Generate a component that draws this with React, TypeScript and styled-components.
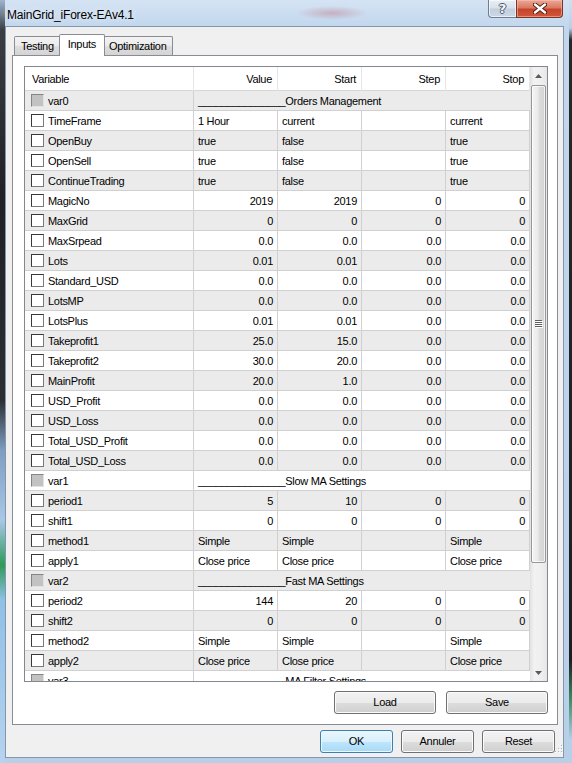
import React from 'react';
import styled, { createGlobalStyle, css } from 'styled-components';

const UI_FONT = `"Liberation Sans", Arial, sans-serif`;

const GlobalStyle = createGlobalStyle`
  html, body { margin: 0; padding: 0; }
  body { width: 572px; height: 763px; overflow: hidden; background: #b9cfe7; }
  *, *::before, *::after { box-sizing: border-box; }
`;

type Kind = 'num' | 'text';
interface Param {
  name: string;
  section?: string;
  kind?: Kind;
  values?: string[];
}

const UNDERLINE = '_______________';

const params: Param[] = [
  { name: 'var0', section: 'Orders Management' },
  { name: 'TimeFrame', kind: 'text', values: ['1 Hour', 'current', '', 'current'] },
  { name: 'OpenBuy', kind: 'text', values: ['true', 'false', '', 'true'] },
  { name: 'OpenSell', kind: 'text', values: ['true', 'false', '', 'true'] },
  { name: 'ContinueTrading', kind: 'text', values: ['true', 'false', '', 'true'] },
  { name: 'MagicNo', kind: 'num', values: ['2019', '2019', '0', '0'] },
  { name: 'MaxGrid', kind: 'num', values: ['0', '0', '0', '0'] },
  { name: 'MaxSrpead', kind: 'num', values: ['0.0', '0.0', '0.0', '0.0'] },
  { name: 'Lots', kind: 'num', values: ['0.01', '0.01', '0.0', '0.0'] },
  { name: 'Standard_USD', kind: 'num', values: ['0.0', '0.0', '0.0', '0.0'] },
  { name: 'LotsMP', kind: 'num', values: ['0.0', '0.0', '0.0', '0.0'] },
  { name: 'LotsPlus', kind: 'num', values: ['0.01', '0.01', '0.0', '0.0'] },
  { name: 'Takeprofit1', kind: 'num', values: ['25.0', '15.0', '0.0', '0.0'] },
  { name: 'Takeprofit2', kind: 'num', values: ['30.0', '20.0', '0.0', '0.0'] },
  { name: 'MainProfit', kind: 'num', values: ['20.0', '1.0', '0.0', '0.0'] },
  { name: 'USD_Profit', kind: 'num', values: ['0.0', '0.0', '0.0', '0.0'] },
  { name: 'USD_Loss', kind: 'num', values: ['0.0', '0.0', '0.0', '0.0'] },
  { name: 'Total_USD_Profit', kind: 'num', values: ['0.0', '0.0', '0.0', '0.0'] },
  { name: 'Total_USD_Loss', kind: 'num', values: ['0.0', '0.0', '0.0', '0.0'] },
  { name: 'var1', section: 'Slow MA Settings' },
  { name: 'period1', kind: 'num', values: ['5', '10', '0', '0'] },
  { name: 'shift1', kind: 'num', values: ['0', '0', '0', '0'] },
  { name: 'method1', kind: 'text', values: ['Simple', 'Simple', '', 'Simple'] },
  { name: 'apply1', kind: 'text', values: ['Close price', 'Close price', '', 'Close price'] },
  { name: 'var2', section: 'Fast MA Settings' },
  { name: 'period2', kind: 'num', values: ['144', '20', '0', '0'] },
  { name: 'shift2', kind: 'num', values: ['0', '0', '0', '0'] },
  { name: 'method2', kind: 'text', values: ['Simple', 'Simple', '', 'Simple'] },
  { name: 'apply2', kind: 'text', values: ['Close price', 'Close price', '', 'Close price'] },
  { name: 'var3', section: 'MA Filter Settings' },
];

const COLS = '169px 84px 84px 84px 84px';

/* ---------- window frame ---------- */

const Window = styled.div`
  width: 572px;
  height: 763px;
  display: flex;
  flex-direction: column;
  padding: 0 8px 5px 5px;
  font-family: ${UI_FONT};
  font-size: 11px;
  letter-spacing: -0.3px;
  color: #000;
  background:
    linear-gradient(to bottom, #9fb6cf 0px, #3a3d42 30px, #1f2124 200px, #2b2e33 400px, #7e9dbf 450px, #a9c8e8 520px, #2f9a58 565px, #8fc0e6 600px, #b7d3ef 763px) left top / 5px 100% no-repeat,
    linear-gradient(to bottom, #cfe0f2 0px, #b9cfe7 28px, #26282c 40px, #1d1f22 660px, #3b8d64 700px, #b4d0ec 740px) right top / 3px 100% no-repeat,
    radial-gradient(ellipse 36px 7px at 332px 13px, rgba(185, 70, 85, 0.3), rgba(185, 70, 85, 0)),
    linear-gradient(to bottom, #d5e4f4 0px, #c2d7ed 26px, #b8cfe8 100%);
`;

const TitleBar = styled.div`
  height: 26px;
  flex: none;
  display: flex;
  align-items: flex-start;
  justify-content: space-between;
`;

const TitleText = styled.div`
  padding: 8px 0 0 2px;
  font-size: 12px;
  line-height: 14px;
  letter-spacing: -0.2px;
  color: #000;
  text-shadow: 0 0 6px rgba(255, 255, 255, 0.9);
`;

const CaptionButtons = styled.div`
  display: flex;
  height: 18px;
  margin-right: 1px;
`;

const CaptionButton = styled.div<{ $variant: 'help' | 'close' }>`
  height: 18px;
  display: flex;
  align-items: center;
  justify-content: center;
  border: 1px solid #6d7f96;
  border-top: none;
  ${(p) =>
    p.$variant === 'help'
      ? css`
          width: 28px;
          border-radius: 0 0 0 4px;
          border-right: none;
          background: linear-gradient(to bottom, #e9eef4 0%, #d9e2ec 45%, #c3cfdd 55%, #cdd8e5 100%);
          box-shadow: inset 0 0 0 1px rgba(255, 255, 255, 0.6);
        `
      : css`
          width: 47px;
          border-color: #7a3526;
          border-radius: 0 0 4px 0;
          background: linear-gradient(to bottom, #e9a896 0%, #dc7a63 45%, #c7442b 55%, #d0573c 100%);
          box-shadow: inset 0 0 0 1px rgba(255, 200, 190, 0.5);
        `}
`;

const HelpGlyph = styled.span`
  font-family: "DejaVu Sans", sans-serif;
  font-weight: bold;
  font-size: 13px;
  line-height: 13px;
  letter-spacing: 0;
  color: #f4f6f9;
  text-shadow: -1px 0 #4a5a6e, 1px 0 #4a5a6e, 0 -1px #4a5a6e, 0 1px #4a5a6e;
`;

/* ---------- client area ---------- */

const Client = styled.div`
  flex: 1;
  display: flex;
  flex-direction: column;
  border: 1px solid #8496ab;
  background: #f0f0f0;
  padding: 7px 0 4px 0;
`;

const TabStrip = styled.div`
  display: flex;
  align-items: flex-end;
  height: 22px;
  margin-left: 8px;
  position: relative;
  z-index: 1;
`;

const Tab = styled.div<{ $active?: boolean }>`
  height: 19px;
  margin-bottom: 1px;
  padding: 0 6px 0 6px;
  border: 1px solid #898c95;
  border-bottom: none;
  border-radius: 2px 2px 0 0;
  line-height: 18px;
  background: linear-gradient(to bottom, #f3f3f3 0%, #ebebeb 50%, #dedede 51%, #d4d4d4 100%);
  & + & {
    margin-left: -1px;
  }
  ${(p) =>
    p.$active &&
    css`
      height: 22px;
      margin: 0 -2px 0 -2px !important;
      padding: 0 8px 0 8px;
      line-height: 19px;
      background: #fff;
      position: relative;
      z-index: 1;
    `}
`;

const Panel = styled.div`
  margin: -1px 5px 0 6px;
  border: 1px solid #898c95;
  background: #fff;
  padding: 10px 9px 10px 11px;
  display: flex;
  flex-direction: column;
`;

/* ---------- inputs grid ---------- */

const Grid = styled.div`
  height: 616px;
  border: 1px solid #828790;
  display: flex;
  background: #fff;
`;

const GridMain = styled.div`
  flex: 1;
  display: flex;
  flex-direction: column;
  overflow: hidden;
`;

const HeaderRow = styled.div`
  display: grid;
  grid-template-columns: ${COLS};
  height: 24px;
  flex: none;
  border-bottom: 1px solid #d5d5d5;
  background: #fff;
`;

const HeaderCell = styled.div<{ $left?: boolean }>`
  line-height: 24px;
  border-right: 1px solid #e5e5e5;
  padding: ${(p) => (p.$left ? '0 0 0 7px' : '0 5px 0 0')};
  text-align: ${(p) => (p.$left ? 'left' : 'right')};
  white-space: nowrap;
`;

const Body = styled.div`
  flex: 1;
  overflow: hidden;
`;

const Row = styled.div<{ $alt: boolean }>`
  display: grid;
  grid-template-columns: ${COLS};
  height: 20px;
  border-bottom: 1px solid #d0d0d0;
  background: ${(p) => (p.$alt ? '#ebebeb' : '#fff')};
`;

const NameCell = styled.div`
  display: flex;
  align-items: center;
  gap: 4px;
  padding-left: 6px;
  border-right: 1px solid #d0d0d0;
  line-height: 20px;
  white-space: nowrap;
  overflow: hidden;
`;

const ValueCell = styled.div<{ $kind: Kind }>`
  line-height: 20px;
  border-right: 1px solid #d0d0d0;
  padding: 0 4px;
  text-align: ${(p) => (p.$kind === 'num' ? 'right' : 'left')};
  white-space: nowrap;
  overflow: hidden;
`;

const SectionCell = styled.div`
  grid-column: 2 / span 4;
  line-height: 20px;
  padding: 0 4px;
  white-space: nowrap;
  overflow: hidden;
`;

const Check = styled.span<{ $group?: boolean }>`
  width: 13px;
  height: 13px;
  flex: none;
  border: 1px solid;
  ${(p) =>
    p.$group
      ? css`
          border-color: #858585 #e2e2e2 #e2e2e2 #858585;
          background: #c2c2c2;
        `
      : css`
          border-color: #383838 #7a7a7a #7a7a7a #383838;
          background: #fff;
        `}
`;

/* ---------- scrollbar ---------- */

const ScrollBar = styled.div`
  width: 17px;
  flex: none;
  display: flex;
  flex-direction: column;
  background: linear-gradient(to right, #e2e2e2 0%, #f2f2f2 25%, #eeeeee 70%, #e6e6e6 100%);
`;

const ScrollArrow = styled.div`
  height: 17px;
  flex: none;
  display: flex;
  align-items: center;
  justify-content: center;
`;

const Thumb = styled.div`
  height: 478px;
  margin: 1px 1px 0 1px;
  border: 1px solid #979797;
  border-radius: 2px;
  background: linear-gradient(to right, #f5f5f5 0%, #eaeaea 45%, #dcdcdc 55%, #d2d2d2 100%);
  box-shadow: inset 0 0 0 1px rgba(255, 255, 255, 0.7);
  display: flex;
  align-items: center;
  justify-content: center;
`;

const TrackFill = styled.div`
  flex: 1;
`;

/* ---------- buttons ---------- */

const PanelButtons = styled.div`
  display: flex;
  justify-content: flex-end;
  gap: 10px;
  margin-top: 9px;
`;

const DialogFooter = styled.div`
  display: flex;
  justify-content: flex-end;
  align-items: flex-end;
  margin-top: 5px;
`;

const DialogButtons = styled.div`
  display: flex;
  gap: 8px;
`;

const Button = styled.div<{ $w: number; $default?: boolean }>`
  width: ${(p) => p.$w}px;
  height: 23px;
  border: 1px solid #707070;
  border-radius: 3px;
  text-align: center;
  line-height: 21px;
  background: linear-gradient(to bottom, #f2f2f2 0%, #ebebeb 50%, #dddddd 51%, #cfcfcf 100%);
  box-shadow: inset 0 0 0 1px #fbfbfb;
  ${(p) =>
    p.$default &&
    css`
      border-color: #3c7fb1;
      background: linear-gradient(to bottom, #eaf6fd 0%, #d9f0fc 50%, #bee6fd 51%, #a7d9f5 100%);
      box-shadow: inset 0 0 0 1px #ecf7fd;
    `}
`;

const Grip = styled.div`
  width: 8px;
  height: 8px;
  display: flex;
  align-items: flex-end;
`;

/* ---------- icons ---------- */

const ArrowIcon = ({ down }: { down?: boolean }) => (
  <svg width="7" height="4" viewBox="0 0 7 4">
    <polygon points={down ? '0,0 7,0 3.5,4' : '0,4 7,4 3.5,0'} fill="#5b5b5b" />
  </svg>
);

const GripperIcon = () => (
  <svg width="8" height="8" viewBox="0 0 8 8">
    {[0, 2, 4, 6].map((y) => (
      <g key={y}>
        <rect x="0" y={y} width="7" height="1" fill="#5f5f5f" />
        <rect x="1" y={y + 1} width="7" height="1" fill="#ffffff" />
      </g>
    ))}
  </svg>
);

const CloseIcon = () => (
  <svg width="14" height="11" viewBox="0 0 14 11">
    <path d="M2 1.5 L12 9.5 M12 1.5 L2 9.5" stroke="#4b1a12" strokeWidth="4.2" strokeLinecap="round" />
    <path d="M2 1.5 L12 9.5 M12 1.5 L2 9.5" stroke="#ffffff" strokeWidth="2.4" strokeLinecap="round" />
  </svg>
);

const SizeGripIcon = () => (
  <svg width="8" height="8" viewBox="0 0 8 8">
    {[
      [6, 0],
      [3, 3],
      [6, 3],
      [0, 6],
      [3, 6],
      [6, 6],
    ].map(([x, y]) => (
      <g key={`${x}-${y}`}>
        <rect x={x + 1} y={y + 1} width="1" height="1" fill="#ffffff" />
        <rect x={x} y={y} width="1" height="1" fill="#a9b3bf" />
      </g>
    ))}
  </svg>
);

/* ---------- app ---------- */

export default function App() {
  return (
    <>
      <GlobalStyle />
      <Window>
        <TitleBar>
          <TitleText>MainGrid_iForex-EAv4.1</TitleText>
          <CaptionButtons>
            <CaptionButton $variant="help">
              <HelpGlyph>?</HelpGlyph>
            </CaptionButton>
            <CaptionButton $variant="close">
              <CloseIcon />
            </CaptionButton>
          </CaptionButtons>
        </TitleBar>
        <Client>
          <TabStrip>
            <Tab>Testing</Tab>
            <Tab $active>Inputs</Tab>
            <Tab>Optimization</Tab>
          </TabStrip>
          <Panel>
            <Grid>
              <GridMain>
                <HeaderRow>
                  <HeaderCell $left>Variable</HeaderCell>
                  <HeaderCell>Value</HeaderCell>
                  <HeaderCell>Start</HeaderCell>
                  <HeaderCell>Step</HeaderCell>
                  <HeaderCell>Stop</HeaderCell>
                </HeaderRow>
                <Body>
                  {params.map((p, i) => (
                    <Row key={p.name} $alt={i % 2 === 0}>
                      <NameCell>
                        <Check $group={!!p.section} />
                        <span>{p.name}</span>
                      </NameCell>
                      {p.section ? (
                        <SectionCell>
                          {UNDERLINE}
                          {p.section}
                        </SectionCell>
                      ) : (
                        (p.values ?? []).map((v, j) => (
                          <ValueCell key={j} $kind={p.kind ?? 'text'}>
                            {v}
                          </ValueCell>
                        ))
                      )}
                    </Row>
                  ))}
                </Body>
              </GridMain>
              <ScrollBar>
                <ScrollArrow>
                  <ArrowIcon />
                </ScrollArrow>
                <Thumb>
                  <GripperIcon />
                </Thumb>
                <TrackFill />
                <ScrollArrow>
                  <ArrowIcon down />
                </ScrollArrow>
              </ScrollBar>
            </Grid>
            <PanelButtons>
              <Button $w={102}>Load</Button>
              <Button $w={102}>Save</Button>
            </PanelButtons>
          </Panel>
          <DialogFooter>
            <DialogButtons>
              <Button $w={73} $default>
                OK
              </Button>
              <Button $w={73}>Annuler</Button>
              <Button $w={73}>Reset</Button>
            </DialogButtons>
            <Grip>
              <SizeGripIcon />
            </Grip>
          </DialogFooter>
        </Client>
      </Window>
    </>
  );
}
